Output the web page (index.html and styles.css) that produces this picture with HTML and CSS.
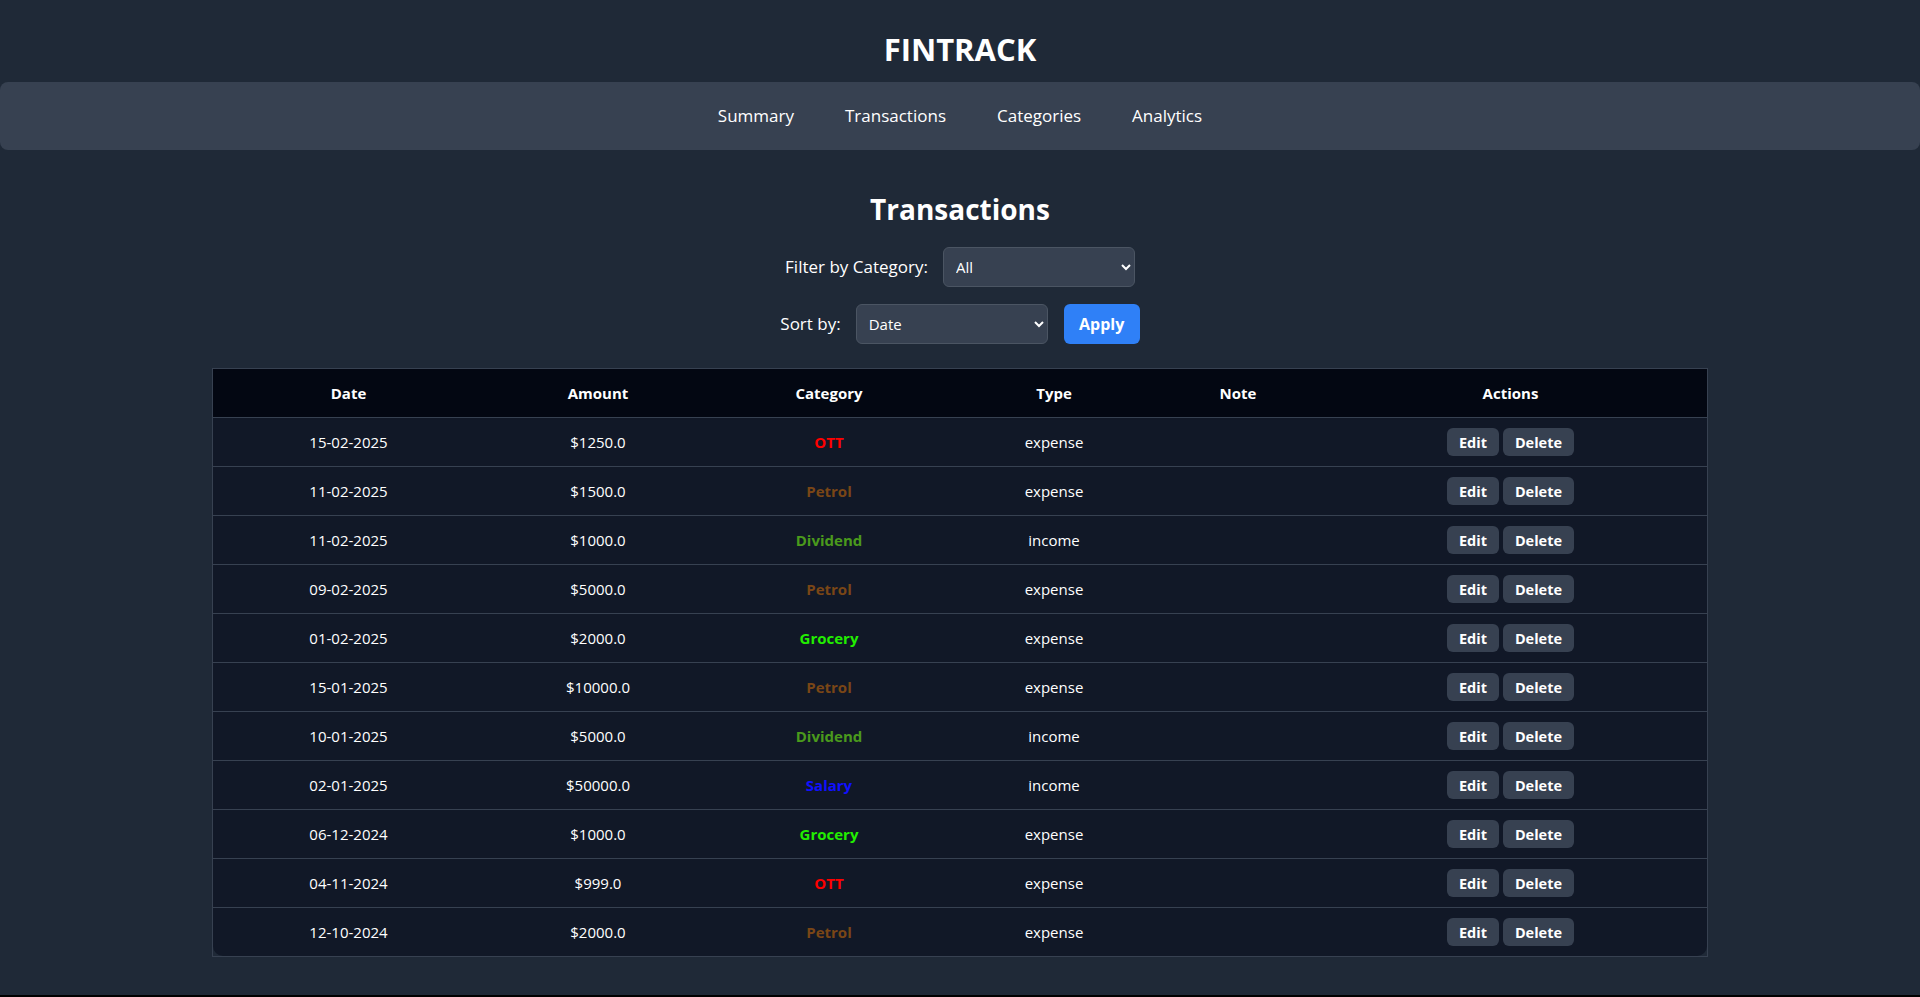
FILE: index.html
```html
<!DOCTYPE html>
<html lang="en">
<head>
<meta charset="utf-8">
<title>FinTrack - Transactions</title>
<link rel="stylesheet" href="styles.css">
</head>
<body>
<div class="page">
  <header class="site-header">
    <h1 class="brand">FINTRACK</h1>
    <nav class="nav">
      <a href="#" class="nav-link">Summary</a>
      <a href="#" class="nav-link">Transactions</a>
      <a href="#" class="nav-link">Categories</a>
      <a href="#" class="nav-link">Analytics</a>
    </nav>
  </header>
  <main class="content">
    <h2 class="page-title">Transactions</h2>
    <form class="controls">
      <div class="control-row">
        <label class="control-label" for="cat">Filter by Category:</label>
        <select id="cat" class="select select-cat">
          <option>All</option>
        </select>
      </div>
      <div class="control-row">
        <label class="control-label" for="sort">Sort by:</label>
        <select id="sort" class="select select-sort">
          <option>Date</option>
        </select>
        <button type="button" class="btn-apply">Apply</button>
      </div>
    </form>
    <div class="table-wrap">
      <table class="tx-table">
        <colgroup>
          <col class="c-date"><col class="c-amount"><col class="c-cat"><col class="c-type"><col class="c-note"><col class="c-actions">
        </colgroup>
        <thead>
          <tr><th>Date</th><th>Amount</th><th>Category</th><th>Type</th><th>Note</th><th>Actions</th></tr>
        </thead>
        <tbody>
          <tr><td>15-02-2025</td><td>$1250.0</td><td class="cat cat-ott">OTT</td><td>expense</td><td></td><td><button class="btn-sm">Edit</button> <button class="btn-sm">Delete</button></td></tr>
          <tr><td>11-02-2025</td><td>$1500.0</td><td class="cat cat-petrol">Petrol</td><td>expense</td><td></td><td><button class="btn-sm">Edit</button> <button class="btn-sm">Delete</button></td></tr>
          <tr><td>11-02-2025</td><td>$1000.0</td><td class="cat cat-dividend">Dividend</td><td>income</td><td></td><td><button class="btn-sm">Edit</button> <button class="btn-sm">Delete</button></td></tr>
          <tr><td>09-02-2025</td><td>$5000.0</td><td class="cat cat-petrol">Petrol</td><td>expense</td><td></td><td><button class="btn-sm">Edit</button> <button class="btn-sm">Delete</button></td></tr>
          <tr><td>01-02-2025</td><td>$2000.0</td><td class="cat cat-grocery">Grocery</td><td>expense</td><td></td><td><button class="btn-sm">Edit</button> <button class="btn-sm">Delete</button></td></tr>
          <tr><td>15-01-2025</td><td>$10000.0</td><td class="cat cat-petrol">Petrol</td><td>expense</td><td></td><td><button class="btn-sm">Edit</button> <button class="btn-sm">Delete</button></td></tr>
          <tr><td>10-01-2025</td><td>$5000.0</td><td class="cat cat-dividend">Dividend</td><td>income</td><td></td><td><button class="btn-sm">Edit</button> <button class="btn-sm">Delete</button></td></tr>
          <tr><td>02-01-2025</td><td>$50000.0</td><td class="cat cat-salary">Salary</td><td>income</td><td></td><td><button class="btn-sm">Edit</button> <button class="btn-sm">Delete</button></td></tr>
          <tr><td>06-12-2024</td><td>$1000.0</td><td class="cat cat-grocery">Grocery</td><td>expense</td><td></td><td><button class="btn-sm">Edit</button> <button class="btn-sm">Delete</button></td></tr>
          <tr><td>04-11-2024</td><td>$999.0</td><td class="cat cat-ott">OTT</td><td>expense</td><td></td><td><button class="btn-sm">Edit</button> <button class="btn-sm">Delete</button></td></tr>
          <tr><td>12-10-2024</td><td>$2000.0</td><td class="cat cat-petrol">Petrol</td><td>expense</td><td></td><td><button class="btn-sm">Edit</button> <button class="btn-sm">Delete</button></td></tr>
        </tbody>
      </table>
    </div>
  </main>
</div>
</body>
</html>
```
FILE: styles.css
```css
html {
  background: #000;
}
body {
  margin: 0;
  font-family: "Open Sans", "Noto Sans", sans-serif;
  color: #fff;
}
.page {
  background: #1f2937;
  min-height: 995px;
  box-sizing: border-box;
  padding-bottom: 20px;
}
.site-header {
  display: flex;
  flex-direction: column;
}
.brand {
  margin: 0;
  padding: 31px 0 15px;
  font-size: 31px;
  line-height: 36px;
  font-weight: 700;
  text-align: center;
  letter-spacing: 0;
}
.nav {
  height: 68px;
  background: #374151;
  border-radius: 8px;
  display: flex;
  justify-content: center;
  align-items: center;
  gap: 51px;
}
.nav-link {
  color: #fff;
  text-decoration: none;
  font-size: 17px;
  line-height: 24px;
}
.content {
  display: flex;
  flex-direction: column;
  align-items: center;
}
.page-title {
  margin: 39px 0 0;
  font-size: 28px;
  line-height: 40px;
  font-weight: 700;
}
.controls {
  display: flex;
  flex-direction: column;
  align-items: center;
  gap: 16px;
  margin-top: 17px;
}
.control-row {
  display: flex;
  align-items: center;
  gap: 15px;
  height: 41px;
}
.control-label {
  font-size: 17px;
}
.select {
  color-scheme: dark;
  width: 192px;
  height: 40px;
  box-sizing: border-box;
  background: #374151;
  color: #fff;
  border: 1px solid #4b5563;
  border-radius: 6px;
  padding: 0 8px;
  font-family: inherit;
  font-size: 15px;
}
.btn-apply {
  margin-left: 1px;
  width: 76px;
  height: 40px;
  border: none;
  border-radius: 6px;
  background: #2f80f7;
  color: #fff;
  font-family: inherit;
  font-size: 16px;
  font-weight: 700;
  cursor: pointer;
}
.table-wrap {
  margin-top: 24px;
  width: 1496px;
  box-sizing: border-box;
  border: 1px solid #374151;
  background: #1f2937;
}
.tx-table {
  width: 100%;
  table-layout: fixed;
  border-collapse: separate;
  border-spacing: 0;
}
.c-date { width: 271px; }
.c-amount { width: 228px; }
.c-cat { width: 234px; }
.c-type { width: 216px; }
.c-note { width: 152px; }
.c-actions { width: auto; }
.tx-table th,
.tx-table td {
  height: 48px;
  padding: 0 10px;
  text-align: center;
  border-bottom: 1px solid #374151;
  font-size: 15px;
}
.tx-table th {
  background: #030712;
  font-weight: 700;
}
.tx-table td {
  background: #111827;
}
.tx-table tbody tr:last-child td {
  border-bottom: none;
}
.tx-table tbody tr:last-child td:first-child {
  border-bottom-left-radius: 10px;
}
.tx-table tbody tr:last-child td:last-child {
  border-bottom-right-radius: 10px;
}
.cat {
  font-weight: 700;
}
.cat-ott { color: #ff0000; }
.cat-petrol { color: #7a4616; }
.cat-dividend { color: #4a9a1c; }
.cat-grocery { color: #22ee00; }
.cat-salary { color: #1010ff; }
.btn-sm {
  height: 28px;
  padding: 0 12px;
  border: none;
  border-radius: 6px;
  background: #374151;
  color: #fff;
  font-family: inherit;
  font-size: 14.5px;
  font-weight: 700;
  cursor: pointer;
}
```
